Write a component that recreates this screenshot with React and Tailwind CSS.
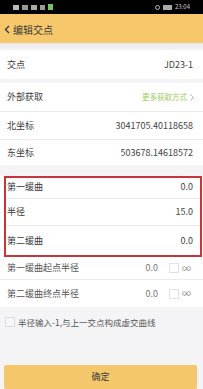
export default function App() {
  const font = { fontFamily: '"Noto Sans CJK SC", "Noto Sans", sans-serif' };

  const Row = ({ label, value, h = "h-[28px]", divider = true }) => (
    <div className={`${h} flex items-center justify-between pl-[7px] pr-[10px] ${divider ? "border-b border-[#ececec]" : ""}`}>
      <span className="text-[9px] text-[#3a3a3a]">{label}</span>
      <span className="text-[9px] text-[#444]">{value}</span>
    </div>
  );

  const RadiusRow = ({ label, h, divider }) => (
    <div className={`${h} flex items-center pl-[7px] pr-[12px] ${divider ? "border-b border-[#ececec]" : ""}`}>
      <span className="text-[9px] text-[#555] flex-1">{label}</span>
      <span className="text-[9px] text-[#777] w-[14px] text-right">0.0</span>
      <span className="ml-[11px] w-[10px] h-[10px] border border-[#e2e2e2] bg-white" />
      <span className="ml-[3px] text-[9px] text-[#888] leading-none">∞</span>
    </div>
  );

  return (
    <div className="w-[203px] h-[389px] overflow-hidden bg-[#f4f4f6] flex flex-col" style={font}>
      {/* status bar */}
      <div className="h-[14px] bg-black flex items-center justify-between px-[13px]">
        <div className="flex items-center gap-[3px]">
          <span className="w-[6px] h-[5px] bg-[#bbb]" />
          <span className="w-[6px] h-[5px] bg-[#999]" />
          <span className="w-[6px] h-[5px] bg-[#aaa]" />
          <span className="w-[5px] h-[5px] bg-[#999]" />
          <span className="w-[5px] h-[6px] bg-[#7cc16a]" />
        </div>
        <div className="flex items-center gap-[3px] text-[6px] text-[#cfcfcf] leading-none">
          <span className="w-[5px] h-[5px] rounded-full border border-[#bbb]" />
          <span className="w-[9px] h-[5px] bg-[#aaa]" />
          <span>23:04</span>
        </div>
      </div>

      {/* header */}
      <div className="h-[29px] bg-[#f6c86b] flex items-center pl-[4px]">
        <svg width="6" height="9" viewBox="0 0 6 9" className="mt-[2px]">
          <path d="M5 1 L1.5 4.5 L5 8" fill="none" stroke="#3a3a3a" strokeWidth="1.4" />
        </svg>
        <span className="ml-[3px] mt-[2px] text-[10px] text-[#3a3a3a]">编辑交点</span>
      </div>

      <div className="h-[7px] bg-gradient-to-b from-[#e9e9eb] to-[#f4f4f6]" />

      <div className="bg-white">
        <Row label="交点" value="JD23-1" h="h-[29px]" divider={false} />
      </div>

      <div className="h-[4px]" />

      <div className="bg-white">
        <div className="h-[29px] flex items-center justify-between pl-[7px] pr-[9px] border-b border-[#ececec] ml-0">
          <span className="text-[9px] text-[#3a3a3a]">外部获取</span>
          <span className="flex items-center gap-[3px]">
            <span className="text-[7.5px] text-[#9ccc5a]">更多获取方式</span>
            <svg width="4" height="7" viewBox="0 0 4 7">
              <path d="M0.5 0.5 L3.5 3.5 L0.5 6.5" fill="none" stroke="#aaa" strokeWidth="0.9" />
            </svg>
          </span>
        </div>
        <Row label="北坐标" value="3041705.40118658" h="h-[28px]" />
        <Row label="东坐标" value="503678.14618572" h="h-[25px]" divider={false} />
      </div>

      <div className="h-[11px]" />

      <div className="bg-white">
        <div className="ml-[4px] mr-[1px] border-2 border-[#c8343a]">
          <div className="h-[21px] flex items-start pt-[2px] justify-between pl-[1px] pr-[7px] border-b border-[#ececec]">
            <span className="text-[9px] text-[#3a3a3a]">第一缓曲</span>
            <span className="text-[9px] text-[#444]">0.0</span>
          </div>
          <div className="h-[27px] flex items-center justify-between pl-[1px] pr-[7px] border-b border-[#ececec]">
            <span className="text-[9px] text-[#3a3a3a]">半径</span>
            <span className="text-[9px] text-[#444]">15.0</span>
          </div>
          <div className="h-[29px] flex items-center justify-between pl-[1px] pr-[7px]">
            <span className="text-[9px] text-[#3a3a3a]">第二缓曲</span>
            <span className="text-[9px] text-[#444]">0.0</span>
          </div>
        </div>
        <RadiusRow label="第一缓曲起点半径" h="h-[23px]" divider />
        <RadiusRow label="第二缓曲终点半径" h="h-[27px]" divider={false} />
      </div>

      <div className="h-[30px] flex items-center pl-[5px]">
        <span className="w-[10px] h-[10px] border border-[#dcdcdc] bg-[#f7f7f7]" />
        <span className="ml-[3px] text-[8.5px] text-[#555]">半径输入-1,与上一交点构成虚交曲线</span>
      </div>

      <div className="flex-1" />

      <div className="px-[4px] pr-[6px]">
        <div className="h-[24px] bg-[#f4c76c] rounded-[2px] flex items-center justify-center">
          <span className="text-[9px] text-[#3a3a3a]">确定</span>
        </div>
      </div>
    </div>
  );
}
